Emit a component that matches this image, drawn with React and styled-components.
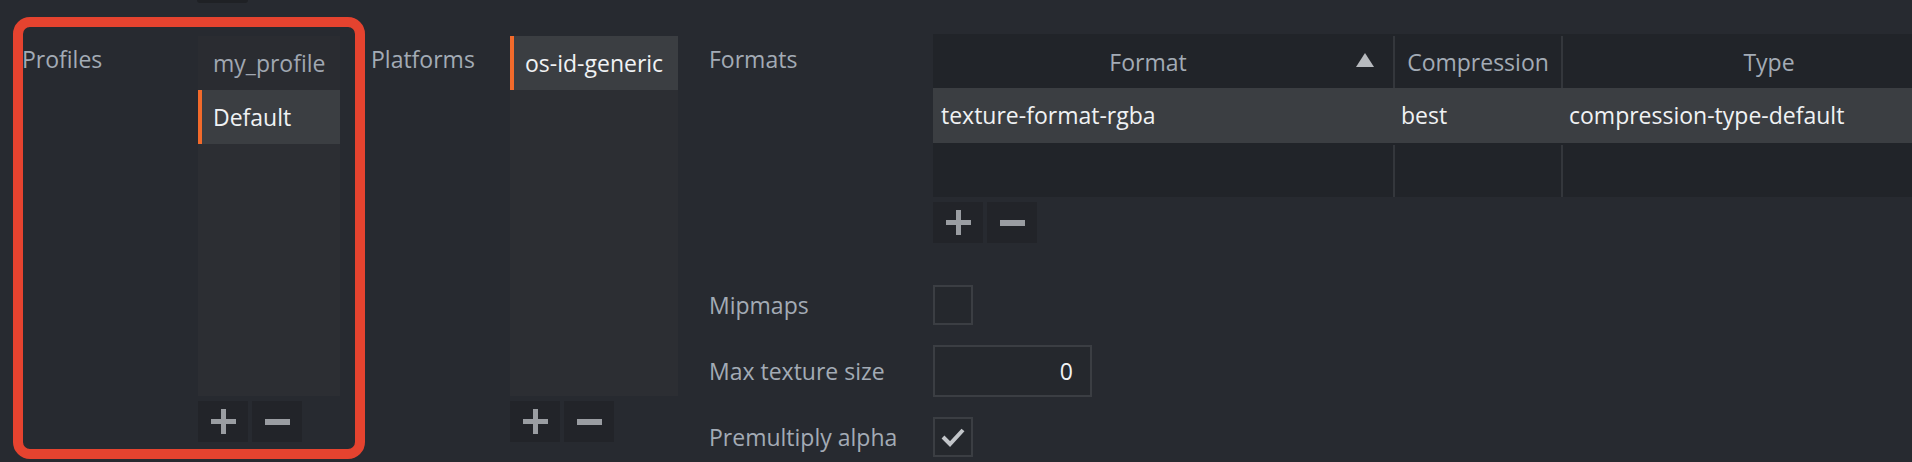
import React from "react";
import styled, { createGlobalStyle } from "styled-components";

const GlobalStyle = createGlobalStyle`
  html, body {
    margin: 0;
    padding: 0;
    background: #272a30;
  }
  body {
    font-family: "Open Sans", "Noto Sans", sans-serif;
  }
  *, *::before, *::after {
    box-sizing: border-box;
  }
`;

// Icons
const PlusIcon = () => (
  <svg width="25" height="25" viewBox="0 0 25 25">
    <rect x="10" y="0" width="5" height="25" fill="currentColor" />
    <rect x="0" y="10" width="25" height="5" fill="currentColor" />
  </svg>
);

const MinusIcon = () => (
  <svg width="25" height="25" viewBox="0 0 25 25">
    <rect x="0" y="10" width="25" height="6" fill="currentColor" />
  </svg>
);

const SortArrow = () => (
  <svg width="18" height="14" viewBox="0 0 18 14">
    <polygon points="9,0 18,14 0,14" fill="#b7babe" />
  </svg>
);

const CheckMark = () => (
  <svg width="26" height="22" viewBox="0 0 26 22">
    <polyline
      points="3,11 10,18 23,4"
      fill="none"
      stroke="#c3c6ca"
      strokeWidth="4"
    />
  </svg>
);

function AddRemove() {
  return (
    <ButtonRow>
      <ToolButton>
        <PlusIcon />
      </ToolButton>
      <ToolButton>
        <MinusIcon />
      </ToolButton>
    </ButtonRow>
  );
}

export default function App() {
  return (
    <>
      <GlobalStyle />
      <Page>
        <TopStrip>
          <StubButton />
        </TopStrip>
        <Body>
          <Field $annotated>
            <Label $w={176} $top>
              Profiles
            </Label>
            <ListColumn $w={142}>
              <List>
                <ListItem>my_profile</ListItem>
                <ListItem $selected>Default</ListItem>
              </List>
              <AddRemove />
            </ListColumn>
          </Field>

          <Field $offset={31}>
            <Label $w={139} $top>
              Platforms
            </Label>
            <ListColumn $w={168}>
              <List>
                <ListItem $selected>os-id-generic</ListItem>
              </List>
              <AddRemove />
            </ListColumn>
          </Field>

          <FormatsPanel>
            <Label $top>Formats</Label>
            <TableBlock>
              <Table>
                <TableRow $h={54}>
                  <HeaderCell>
                    <HeaderText $pad={15}>Format</HeaderText>
                    <SortBox>
                      <SortArrow />
                    </SortBox>
                  </HeaderCell>
                  <HeaderCell $sep>
                    <HeaderText>Compression</HeaderText>
                  </HeaderCell>
                  <HeaderCell $sep>
                    <HeaderText>Type</HeaderText>
                  </HeaderCell>
                </TableRow>
                <TableRow $h={55} $selected>
                  <DataCell>texture-format-rgba</DataCell>
                  <DataCell>best</DataCell>
                  <DataCell>compression-type-default</DataCell>
                </TableRow>
                <TableRow $h={54}>
                  <EmptyCell />
                  <EmptyCell $sep />
                  <EmptyCell $sep />
                </TableRow>
              </Table>
              <AddRemove />
            </TableBlock>

            <Label>Mipmaps</Label>
            <CheckBox />

            <Label>Max texture size</Label>
            <NumberInput>0</NumberInput>

            <Label>Premultiply alpha</Label>
            <CheckBox>
              <CheckMark />
            </CheckBox>
          </FormatsPanel>
        </Body>
      </Page>
    </>
  );
}

const Page = styled.div`
  width: 1912px;
  height: 462px;
  overflow: hidden;
  background: #272a30;
`;

const TopStrip = styled.div`
  height: 3px;
  padding-left: 197px;
`;

const StubButton = styled.div`
  width: 51px;
  height: 3px;
  background: #1f2125;
  border-radius: 0 0 3px 3px;
`;

const Body = styled.div`
  display: flex;
  align-items: flex-start;
  padding: 31px 0 0 22px;
`;

const Field = styled.div`
  display: flex;
  align-items: flex-start;
  flex: none;
  margin-left: ${(p) => p.$offset || 0}px;
  position: relative;

  ${(p) =>
    p.$annotated &&
    `
    &::after {
      content: "";
      position: absolute;
      left: -9px;
      top: -17px;
      width: 352px;
      height: 442px;
      border: 10px solid #e5432f;
      border-radius: 17px;
      pointer-events: none;
    }
  `}
`;

const Label = styled.div`
  flex: none;
  width: ${(p) => (p.$w ? `${p.$w}px` : "auto")};
  padding-top: ${(p) => (p.$top ? "9px" : "0")};
  align-self: ${(p) => (p.$top ? "start" : "center")};
  font-size: 23px;
  line-height: 32px;
  color: #a3abb5;
  white-space: nowrap;
`;

const ListColumn = styled.div`
  width: ${(p) => p.$w}px;
  flex: none;
  padding-top: 2px;
`;

const List = styled.div`
  height: 360px;
  background: #2c2e33;
`;

const ListItem = styled.div`
  height: 54px;
  line-height: 54px;
  padding-left: 15px;
  font-size: 23px;
  white-space: nowrap;
  overflow: hidden;
  color: ${(p) => (p.$selected ? "#f0f2f4" : "#a0a7b1")};
  background: ${(p) => (p.$selected ? "#3b3e42" : "#2a2c31")};
  box-shadow: ${(p) => (p.$selected ? "inset 4px 0 0 #f26a2b" : "none")};
`;

const ButtonRow = styled.div`
  display: flex;
  gap: 4px;
  margin-top: 5px;
`;

const ToolButton = styled.div`
  width: 50px;
  height: 41px;
  display: flex;
  align-items: center;
  justify-content: center;
  background: #222429;
  color: #9a9da2;
`;

const FormatsPanel = styled.div`
  margin-left: 31px;
  display: grid;
  grid-template-columns: 224px 1042px;
  row-gap: 20px;
  align-items: center;
`;

const TableBlock = styled.div`
  margin-bottom: 22px;
  align-self: start;
`;

const Table = styled.div`
  width: 1042px;
  background: #212429;
`;

const TableRow = styled.div`
  display: grid;
  grid-template-columns: 460px 168px 414px;
  height: ${(p) => p.$h}px;
  background: ${(p) => (p.$selected ? "#3b3e42" : "transparent")};
`;

const HeaderCell = styled.div`
  display: flex;
  align-items: center;
  margin-top: 2px;
  border-left: ${(p) => (p.$sep ? "2px solid #34373c" : "none")};
`;

const HeaderText = styled.div`
  flex: 1;
  text-align: center;
  padding-left: ${(p) => p.$pad || 0}px;
  font-size: 23px;
  line-height: 52px;
  color: #a3abb5;
  white-space: nowrap;
`;

const SortBox = styled.div`
  display: flex;
  margin: 0 19px 4px 8px;
`;

const DataCell = styled.div`
  padding-left: 8px;
  font-size: 23px;
  line-height: 55px;
  color: #f0f2f4;
  white-space: nowrap;
`;

const EmptyCell = styled.div`
  margin-top: 2px;
  border-left: ${(p) => (p.$sep ? "2px solid #34373c" : "none")};
`;

const CheckBox = styled.div`
  width: 40px;
  height: 40px;
  border: 2px solid #3b3e43;
  background: #25282d;
  display: flex;
  align-items: center;
  justify-content: center;
`;

const NumberInput = styled.div`
  width: 159px;
  height: 52px;
  border: 2px solid #3b3e43;
  background: #25282d;
  padding-right: 17px;
  text-align: right;
  font-size: 23px;
  line-height: 48px;
  color: #f0f2f4;
`;
